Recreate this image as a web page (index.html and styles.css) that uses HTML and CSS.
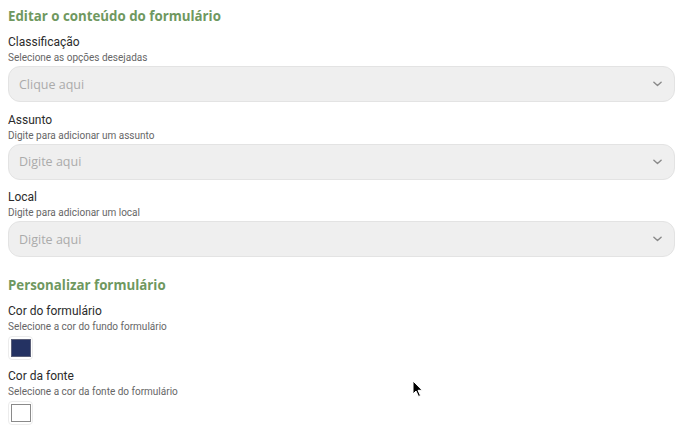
FILE: index.html
```html
<!DOCTYPE html>
<html lang="pt">
<head>
<meta charset="utf-8">
<link rel="stylesheet" href="styles.css">
</head>
<body>
<div class="page">
  <h2 class="section-title first">Editar o conteúdo do formulário</h2>
  <div class="field">
    <div class="label">Classificação</div>
    <div class="hint">Selecione as opções desejadas</div>
    <div class="select"><span class="ph">Clique aqui</span>
      <svg class="chev" viewBox="0 0 10 6" width="9" height="6"><path d="M1 1 L5 4.6 L9 1" fill="none" stroke="#8a8a8a" stroke-width="1.6" stroke-linecap="round" stroke-linejoin="round"/></svg>
    </div>
  </div>
  <div class="field">
    <div class="label">Assunto</div>
    <div class="hint">Digite para adicionar um assunto</div>
    <div class="select"><span class="ph">Digite aqui</span>
      <svg class="chev" viewBox="0 0 10 6" width="9" height="6"><path d="M1 1 L5 4.6 L9 1" fill="none" stroke="#8a8a8a" stroke-width="1.6" stroke-linecap="round" stroke-linejoin="round"/></svg>
    </div>
  </div>
  <div class="field">
    <div class="label">Local</div>
    <div class="hint">Digite para adicionar um local</div>
    <div class="select"><span class="ph">Digite aqui</span>
      <svg class="chev" viewBox="0 0 10 6" width="9" height="6"><path d="M1 1 L5 4.6 L9 1" fill="none" stroke="#8a8a8a" stroke-width="1.6" stroke-linecap="round" stroke-linejoin="round"/></svg>
    </div>
  </div>

  <h2 class="section-title second">Personalizar formulário</h2>
  <div class="color-field">
    <div class="label">Cor do formulário</div>
    <div class="hint">Selecione a cor do fundo formulário</div>
    <div class="swatch"><span class="swatch-fill navy"></span></div>
  </div>
  <div class="color-field">
    <div class="label">Cor da fonte</div>
    <div class="hint">Selecione a cor da fonte do formulário</div>
    <div class="swatch"><span class="swatch-fill white"></span></div>
  </div>
</div>
<svg class="cursor" width="12" height="18" viewBox="0 0 12 18"><path d="M1 1 L1 14 L4 11 L6.5 16.5 L8.5 15.6 L6 10.3 L10.2 10.3 Z" fill="#000" stroke="#fff" stroke-width="1"/></svg>
</body>
</html>
```

FILE: styles.css
```css
html, body {
  margin: 0;
  padding: 0;
  background: #ffffff;
}
body {
  position: relative;
  width: 686px;
  height: 437px;
  overflow: hidden;
  font-family: Roboto, "Liberation Sans", Arial, sans-serif;
}
.page {
  padding: 7px 11px 0 8px;
  display: flex;
  flex-direction: column;
}
.section-title {
  margin: 0;
  font-family: "Open Sans", "Noto Sans", sans-serif;
  font-weight: 700;
  font-size: 13.3px;
  line-height: 18px;
  color: #6f9860;
}
.section-title.first { margin-bottom: 8px; }
.section-title.second { margin-top: 10px; margin-bottom: 8px; }
.field {
  display: flex;
  flex-direction: column;
  margin-bottom: 8.5px;
}
.label {
  font-size: 12px;
  line-height: 16px;
  padding-top: 1px;
  color: #2b2b2b;
}
.hint {
  font-size: 10px;
  line-height: 14px;
  margin-top: 1px;
  color: #666666;
}
.select {
  margin-top: 1px;
  height: 36px;
  box-sizing: border-box;
  border: 1px solid #e3e3e3;
  background: #efefef;
  border-radius: 12px;
  display: flex;
  align-items: center;
  justify-content: space-between;
  padding: 0 12px 0 10px;
}
.ph {
  font-family: "Open Sans", "Noto Sans", sans-serif;
  font-size: 12.5px;
  color: #ababab;
}
.chev { display: block; }
.color-field {
  display: flex;
  flex-direction: column;
  margin-bottom: 7px;
}
.color-field .hint { margin-top: 1px; }
.swatch {
  margin-top: 2px;
  width: 25px;
  height: 24px;
  box-sizing: border-box;
  border: 1px solid #ececec;
  border-radius: 4px;
  background: #fff;
  display: flex;
  align-items: center;
  justify-content: center;
}
.swatch-fill {
  display: block;
  width: 20px;
  height: 18px;
  box-sizing: border-box;
  border: 1px solid #8a8a8a;
}
.swatch-fill.navy { background: #243262; border-color: #5a5f78; }
.swatch-fill.white { background: #ffffff; border-color: #8a8a8a; }
.cursor {
  position: absolute;
  left: 412px;
  top: 380px;
}
```
